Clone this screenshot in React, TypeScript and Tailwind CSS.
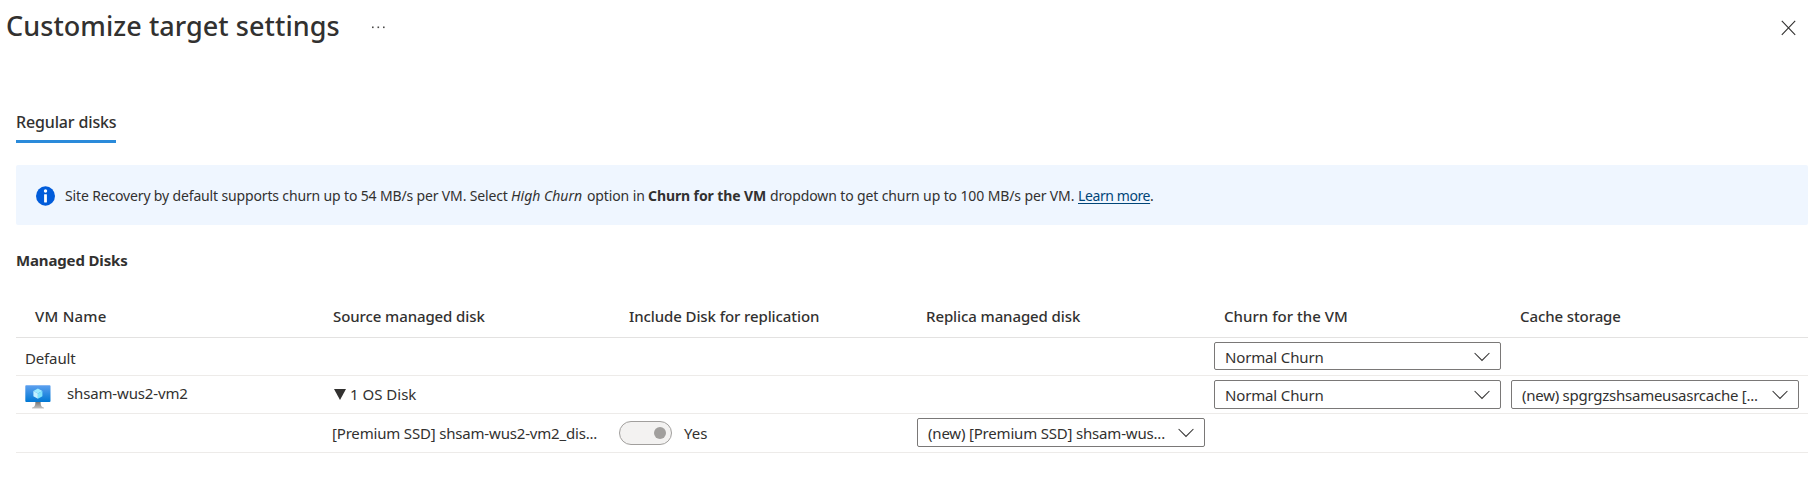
import React from "react";

const grid = "grid grid-cols-[298px_297px_297px_298px_297px_305px]";

function Chevron() {
  return (
    <svg width="16" height="10" viewBox="0 0 16 10" className="shrink-0" fill="none" stroke="#323130" strokeWidth="1.05">
      <path d="M0.6 1 L8 8.4 L15.4 1" />
    </svg>
  );
}

function Select({ children, className }: { children: string; className: string }) {
  return (
    <div className={`flex items-center justify-between rounded-[2px] border border-[#7a7877] bg-white pr-[10px] ${className}`}>
      <span className="whitespace-nowrap">{children}</span>
      <Chevron />
    </div>
  );
}

function VmIcon() {
  return (
    <svg width="26" height="24" viewBox="0 0 26 24">
      <defs>
        <linearGradient id="screen" x1="0" y1="0" x2="0" y2="1">
          <stop offset="0" stopColor="#5ea0ef" />
          <stop offset="1" stopColor="#0078d4" />
        </linearGradient>
        <linearGradient id="stand" x1="0" y1="0" x2="0" y2="1">
          <stop offset="0" stopColor="#707070" />
          <stop offset="1" stopColor="#c4c4c4" />
        </linearGradient>
      </defs>
      <path d="M10.4 16.5h5.2c0 4 .6 5.4 3.4 6.2v.9H7v-.9c2.8-.8 3.4-2.2 3.4-6.2z" fill="url(#stand)" />
      <rect x="0.3" y="0.2" width="25.2" height="16.8" rx="0.9" fill="url(#screen)" />
      <path d="M12.9 3.4 17.4 6 12.9 8.6 8.4 6z" fill="#9cebff" />
      <path d="M8.4 6 12.9 8.6V13.8L8.4 11.2z" fill="#c3f1ff" />
      <path d="M17.4 6 12.9 8.6V13.8L17.4 11.2z" fill="#7fe3fb" />
    </svg>
  );
}

export default function App() {
  return (
    <div className="h-[496px] w-full overflow-hidden bg-white font-['Noto_Sans',sans-serif] text-[15px] leading-6 text-[#323130]">
      <header className="flex h-[102px] items-start justify-between pl-[6px] pr-[19px]">
        <div className="flex">
          <h1 className="mt-[6px] w-[366px] whitespace-nowrap text-[27px] font-medium leading-10 tracking-[0.06px]">Customize target settings</h1>
          <svg width="14" height="3" className="mt-[26px]" fill="#4a4948">
            <rect x="0" y="0.5" width="1.6" height="1.6" />
            <rect x="5.5" y="0.5" width="1.6" height="1.6" />
            <rect x="11" y="0.5" width="1.6" height="1.6" />
          </svg>
        </div>
        <svg width="15" height="16" viewBox="0 0 15 16" className="mt-5" stroke="#323130" strokeWidth="1.1">
          <path d="M0.8 0.8 14.2 14.8M14.2 0.8 0.8 14.8" />
        </svg>
      </header>

      <main className="w-[1808px] pl-4">
        <div className="flex h-[63px]">
          <div className="h-[41px] w-[100px] whitespace-nowrap border-b-[3px] border-[#2a8ada] pt-2 text-[16px] font-medium tracking-[-0.15px]">
            Regular disks
          </div>
        </div>

        <div className="flex h-[60px] items-center rounded-[2px] bg-[#eff6ff] pl-5 text-[14px]">
          <svg width="19" height="20" viewBox="0 0 19 20" className="mr-[9px] mt-px">
            <ellipse cx="9.5" cy="10" rx="9.5" ry="9.7" fill="#015cda" />
            <circle cx="9.5" cy="5" r="1.7" fill="#fff" />
            <rect x="8.1" y="8.2" width="2.8" height="8.2" rx="0.4" fill="#fff" />
          </svg>
          <div className="flex whitespace-nowrap pl-px pt-[2px]">
            <span className="w-[446px] tracking-[-0.15px]">Site Recovery by default supports churn up to 54 MB/s per VM. Select</span>
            <em className="w-[76px]">High Churn</em>
            <span className="w-[61px] tracking-[-0.12px]">option in</span>
            <b className="w-[122px] tracking-[-0.1px]">Churn for the VM</b>
            <span className="w-[308px] tracking-[-0.12px]">dropdown to get churn up to 100 MB/s per VM.</span>
            <a className="w-[72px] tracking-[-0.4px] text-[#004578] underline decoration-1 underline-offset-2">Learn more</a>
            <span>.</span>
          </div>
        </div>

        <h2 className="h-[67px] pt-[23px] font-bold tracking-[-0.15px]">Managed Disks</h2>

        <div className={`${grid} h-[46px] whitespace-nowrap border-b border-[#e3e2e1] pt-[12px] font-medium tracking-[-0.1px]`}>
          <span className="pl-[19px] tracking-[0.25px]">VM Name</span>
          <span className="pl-[19px]">Source managed disk</span>
          <span className="pl-[18px]">Include Disk for replication</span>
          <span className="pl-[18px]">Replica managed disk</span>
          <span className="pl-[18px] tracking-[0.03px]">Churn for the VM</span>
          <span className="pl-[17px]">Cache storage</span>
        </div>

        <div className={`${grid} h-[38px] border-b border-[#edebe9]`}>
          <span className="pl-[9px] pt-[8px] tracking-[-0.15px]">Default</span>
          <span />
          <span />
          <span />
          <Select className="ml-2 mt-1 h-7 w-[287px] pl-[10px] pt-px tracking-[-0.15px]">Normal Churn</Select>
        </div>

        <div className={`${grid} h-[38px] border-b border-[#edebe9]`}>
          <div className="flex pl-[9px]">
            <div className="mt-[9px] w-[42px]"><VmIcon /></div>
            <span className="pt-[5px] tracking-[-0.15px]">shsam-wus2-vm2</span>
          </div>
          <div className="flex pl-5 pt-[6px]">
            <svg width="12" height="11" className="mr-[4px] mt-[7px]"><path d="M0 0H12L6 11z" fill="#323130" /></svg>
            <span>1 OS Disk</span>
          </div>
          <span />
          <span />
          <Select className="ml-2 mt-1 h-[29px] w-[287px] pl-[10px] pt-px tracking-[-0.15px]">Normal Churn</Select>
          <Select className="ml-2 mt-1 h-[29px] w-[288px] pl-[10px] pt-px tracking-[-0.25px]">(new) spgrgzshsameusasrcache [...</Select>
        </div>

        <div className={`${grid} h-[39px] border-b border-[#edebe9]`}>
          <span />
          <span className="whitespace-nowrap pl-[18px] pt-[7px] tracking-[-0.18px]">[Premium SSD] shsam-wus2-vm2_dis...</span>
          <div className="flex pl-2 pt-[7px]">
            <div className="flex h-6 w-[53px] items-center justify-end rounded-full border border-[#a19f9d] bg-[#f3f2f1] pr-[5px]">
              <div className="size-3 rounded-full bg-[#a19f9d]" />
            </div>
            <span className="pl-3">Yes</span>
          </div>
          <Select className="ml-[9px] mt-1 h-[29px] w-[288px] pl-[10px] pt-px tracking-[-0.19px]">(new) [Premium SSD] shsam-wus...</Select>
        </div>
      </main>
    </div>
  );
}
